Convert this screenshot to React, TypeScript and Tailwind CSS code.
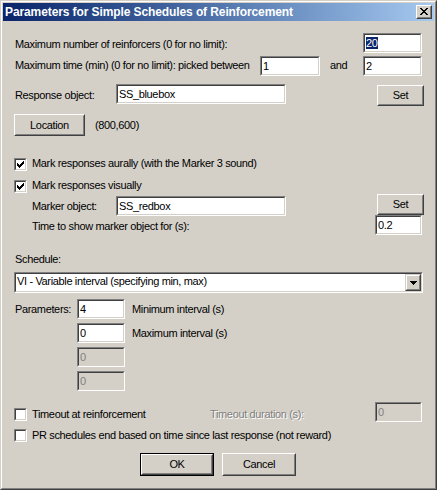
import React from "react";

const CHECK = [
  [6, 0], [5, 1], [6, 1], [0, 2], [4, 2], [5, 2], [6, 2],
  [0, 3], [1, 3], [3, 3], [4, 3], [5, 3],
  [0, 4], [1, 4], [2, 4], [3, 4], [4, 4],
  [1, 5], [2, 5], [3, 5], [2, 6],
];

const XG = [
  "##....##",
  ".##..##.",
  "..####..",
  "...##...",
  "..####..",
  ".##..##.",
  "##....##",
];

function Pixels({ rows, cls }: { rows: string[]; cls: string }) {
  const w = rows[0].length;
  const h = rows.length;
  const rects: React.ReactElement[] = [];
  rows.forEach((r, y) =>
    r.split("").forEach((c, x) => {
      if (c === "#") rects.push(<rect key={`${x}-${y}`} x={x} y={y} width={1} height={1} />);
    })
  );
  return (
    <svg width={w} height={h} viewBox={`0 0 ${w} ${h}`} shapeRendering="crispEdges" className={cls}>
      {rects}
    </svg>
  );
}

function Check({ checked }: { checked: boolean }) {
  return (
    <div className="w-[13px] h-[13px] border border-t-[#808080] border-l-[#808080] border-r-white border-b-white shrink-0">
      <div className="w-full h-full border border-t-[#404040] border-l-[#404040] border-r-[#d4d0c8] border-b-[#d4d0c8] bg-white pl-[1px] pt-[1px]">
        {checked && (
          <svg width="7" height="7" viewBox="0 0 7 7" shapeRendering="crispEdges" fill="#000">
            {CHECK.map(([x, y]) => (
              <rect key={`${x}-${y}`} x={x} y={y} width={1} height={1} />
            ))}
          </svg>
        )}
      </div>
    </div>
  );
}

function Field({ cls, children, disabled }: { cls: string; children?: React.ReactNode; disabled?: boolean }) {
  return (
    <div className={`${cls} h-[20px] shrink-0 border border-t-[#808080] border-l-[#808080] border-r-white border-b-white`}>
      <div
        className={`h-full border border-t-[#404040] border-l-[#404040] border-r-[#d4d0c8] border-b-[#d4d0c8] pl-[1px] pt-[2px] leading-[13px] whitespace-nowrap overflow-hidden ${
          disabled ? "bg-[#d4d0c8] text-[#808080]" : "bg-white text-black"
        }`}
      >
        {children}
      </div>
    </div>
  );
}

function Btn({ cls, children, def }: { cls: string; children: React.ReactNode; def?: boolean }) {
  const inner = (
    <div className="h-full border border-t-white border-l-white border-r-[#404040] border-b-[#404040]">
      <div className="h-full border border-t-[#d4d0c8] border-l-[#d4d0c8] border-r-[#808080] border-b-[#808080] flex items-center justify-center leading-[13px]">
        {children}
      </div>
    </div>
  );
  if (def) {
    return <div className={`${cls} shrink-0 border border-black`}>{inner}</div>;
  }
  return <div className={`${cls} shrink-0`}>{inner}</div>;
}

export default function App() {
  return (
    <div className="w-[437px] h-[490px] bg-[#d4d0c8] border border-t-[#d4d0c8] border-l-[#d4d0c8] border-r-[#404040] border-b-[#404040] font-['Liberation_Sans',Arial,sans-serif] text-[11px] leading-[13px] tracking-[-0.35px] text-black select-none">
      <div className="h-full border border-t-white border-l-white border-r-[#808080] border-b-[#808080] p-[1px] flex flex-col">
        {/* title bar */}
        <div className="h-[18px] shrink-0 flex items-center bg-gradient-to-r from-[#0a246a] to-[#a6caf0]">
          <div className="ml-[2px] text-white font-bold text-[12px] leading-[18px] tracking-[-0.1px] whitespace-nowrap">
            Parameters for Simple Schedules of Reinforcement
          </div>
          <div className="ml-auto mr-[2px] w-[16px] h-[14px] shrink-0 border border-t-white border-l-white border-r-[#404040] border-b-[#404040]">
            <div className="w-full h-full border border-t-[#d4d0c8] border-l-[#d4d0c8] border-r-[#808080] border-b-[#808080] bg-[#d4d0c8] pl-[2px] pt-[1px]">
              <Pixels rows={XG} cls="fill-black" />
            </div>
          </div>
        </div>

        {/* body */}
        <div className="flex flex-col">
          {/* Row A */}
          <div className="mt-[12px] h-[23px] flex items-start">
            <div className="ml-[12px] w-[348px] mt-[5px] whitespace-nowrap">Maximum number of reinforcers (0 for no limit):</div>
            <Field cls="w-[59px]">
              <span className="bg-[#0a246a] text-white">20</span>
            </Field>
          </div>
          {/* Row B */}
          <div className="h-[28px] flex items-start">
            <div className="ml-[12px] w-[245px] mt-[3px] whitespace-nowrap">Maximum time (min) (0 for no limit): picked between</div>
            <Field cls="w-[60px]">1</Field>
            <div className="ml-[10px] w-[33px] mt-[3px]">and</div>
            <Field cls="w-[59px]">2</Field>
          </div>
          {/* Row C */}
          <div className="h-[30px] flex items-start">
            <div className="ml-[12px] w-[101px] mt-[5px] whitespace-nowrap">Response object:</div>
            <Field cls="w-[170px]">SS_bluebox</Field>
            <div className="ml-[91px] mt-[1px]">
              <Btn cls="w-[47px] h-[21px]">Set</Btn>
            </div>
          </div>
          {/* Row D */}
          <div className="h-[43px] flex items-start">
            <div className="ml-[11px]">
              <Btn cls="w-[71px] h-[22px]">Location</Btn>
            </div>
            <div className="ml-[10px] mt-[5px]">(800,600)</div>
          </div>
          {/* Row E */}
          <div className="h-[22px] flex items-start">
            <div className="ml-[11px] mt-[1px]">
              <Check checked />
            </div>
            <div className="ml-[5px] whitespace-nowrap">Mark responses aurally (with the Marker 3 sound)</div>
          </div>
          {/* Row F */}
          <div className="h-[15px] flex items-start">
            <div className="ml-[11px] mt-[1px]">
              <Check checked />
            </div>
            <div className="ml-[5px] whitespace-nowrap">Mark responses visually</div>
          </div>
          {/* Row G */}
          <div className="h-[21px] flex items-start">
            <div className="ml-[29px] w-[84px] mt-[6px] whitespace-nowrap">Marker object:</div>
            <div className="mt-[2px]">
              <Field cls="w-[170px]">SS_redbox</Field>
            </div>
            <div className="ml-[91px]">
              <Btn cls="w-[47px] h-[21px]">Set</Btn>
            </div>
          </div>
          {/* Row H */}
          <div className="h-[38px] flex items-start">
            <div className="ml-[29px] w-[343px] mt-[5px] whitespace-nowrap">Time to show marker object for (s):</div>
            <Field cls="w-[47px]">0.2</Field>
          </div>
          {/* Row I */}
          <div className="h-[19px] flex items-start">
            <div className="ml-[12px]">Schedule:</div>
          </div>
          {/* Row J */}
          <div className="h-[27px] flex items-start">
            <div className="ml-[11px] w-[409px] h-[21px] border border-t-[#808080] border-l-[#808080] border-r-white border-b-white">
              <div className="h-full flex border border-t-[#404040] border-l-[#404040] border-r-[#d4d0c8] border-b-[#d4d0c8] bg-white">
                <div className="flex-1 pl-[1px] pt-[1px] whitespace-nowrap">VI - Variable interval (specifying min, max)</div>
                <div className="w-[16px] h-full border border-t-[#d4d0c8] border-l-[#d4d0c8] border-r-[#404040] border-b-[#404040]">
                  <div className="w-full h-full border border-t-white border-l-white border-r-[#808080] border-b-[#808080] bg-[#d4d0c8] flex items-center justify-center">
                    <Pixels rows={["#######", ".#####.", "..###..", "...#..."]} cls="fill-black mt-[1px]" />
                  </div>
                </div>
              </div>
            </div>
          </div>
          {/* Row K */}
          <div className="h-[24px] flex items-start">
            <div className="ml-[12px] w-[62px] mt-[4px] whitespace-nowrap">Parameters:</div>
            <Field cls="w-[48px]">4</Field>
            <div className="ml-[7px] mt-[4px] whitespace-nowrap">Minimum interval (s)</div>
          </div>
          {/* Row L */}
          <div className="h-[24px] flex items-start">
            <div className="ml-[74px]">
              <Field cls="w-[48px]">0</Field>
            </div>
            <div className="ml-[7px] mt-[4px] whitespace-nowrap">Maximum interval (s)</div>
          </div>
          {/* Row M */}
          <div className="h-[24px] flex items-start">
            <div className="ml-[74px]">
              <Field cls="w-[48px]" disabled>0</Field>
            </div>
          </div>
          {/* Row N */}
          <div className="h-[31px] flex items-start">
            <div className="ml-[74px]">
              <Field cls="w-[48px]" disabled>0</Field>
            </div>
          </div>
          {/* Row O */}
          <div className="h-[27px] flex items-start">
            <div className="ml-[11px] mt-[6px]">
              <Check checked={false} />
            </div>
            <div className="ml-[5px] w-[178px] mt-[6px] whitespace-nowrap">Timeout at reinforcement</div>
            <div className="w-[165px] mt-[6px] whitespace-nowrap text-[#808080] [text-shadow:1px_1px_0_#ffffff]">Timeout duration (s):</div>
            <Field cls="w-[47px]" disabled>0</Field>
          </div>
          {/* Row P */}
          <div className="h-[24px] flex items-start">
            <div className="ml-[11px]">
              <Check checked={false} />
            </div>
            <div className="ml-[5px] whitespace-nowrap">PR schedules end based on time since last response (not reward)</div>
          </div>
          {/* Row Q */}
          <div className="h-[23px] flex items-start">
            <div className="ml-[137px]">
              <Btn cls="w-[74px] h-[23px]" def>OK</Btn>
            </div>
            <div className="ml-[8px]">
              <Btn cls="w-[74px] h-[23px]">Cancel</Btn>
            </div>
          </div>
        </div>
      </div>
    </div>
  );
}
